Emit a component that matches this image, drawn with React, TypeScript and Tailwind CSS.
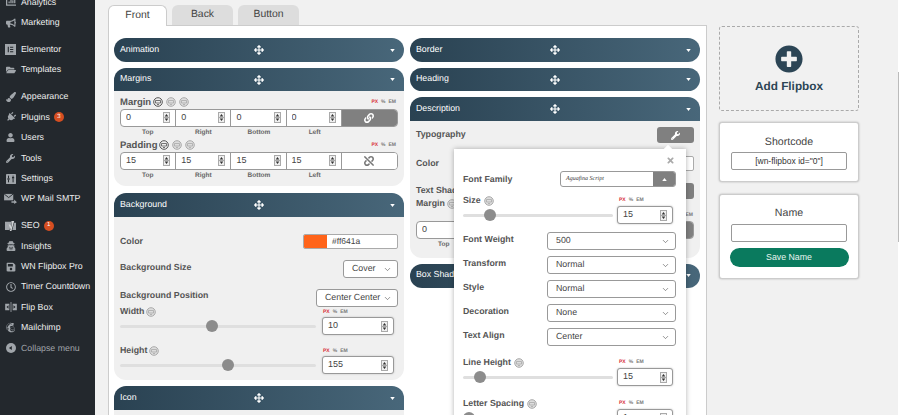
import type { ReactNode } from "react";
import {
  FaArrowsAlt,
  FaBullhorn,
  FaChartBar,
  FaFolderOpen,
  FaLink,
  FaMailchimp,
  FaPaintBrush,
  FaPlug,
  FaPlusCircle,
  FaRegClock,
  FaSave,
  FaTimes,
  FaUnlink,
  FaUser,
  FaUserSecret,
  FaWrench,
} from "react-icons/fa";
import { ChevronDown } from "lucide-react";

function ElementorIcon() {
  return (
    <svg viewBox="0 0 12 12" className="h-[11px] w-[11px]">
      <rect width="12" height="12" fill="#a0a5aa" />
      <path d="M3 3h1.2v6H3zM5.5 3H9v1.2H5.5zM5.5 5.4H9v1.2H5.5zM5.5 7.8H9V9H5.5z" fill="#23282d" />
    </svg>
  );
}

function SettingsIcon() {
  return (
    <svg viewBox="0 0 12 12" className="h-[10px] w-[10px]">
      <rect width="12" height="12" rx="1" fill="#a0a5aa" />
      <path d="M3 2v3M3 7v3M8.5 2v1.5M8.5 5.5V10" stroke="#23282d" strokeWidth="1.2" />
      <path d="M1.7 5h2.6v2H1.7zM7.2 3.5h2.6v2H7.2z" fill="#23282d" />
    </svg>
  );
}

function MailSmtpIcon() {
  return (
    <svg viewBox="0 0 14 12" className="h-[11px] w-[13px]">
      <path d="M0 1h10v7H0z" fill="#a0a5aa" />
      <path d="M0 1l5 4 5-4" fill="none" stroke="#23282d" />
      <path d="M8 9h3V7l3 3-3 2v-1.5H8z" fill="#a0a5aa" />
    </svg>
  );
}

function YoastIcon() {
  return (
    <svg viewBox="0 0 12 12" className="h-[11px] w-[11px]">
      <path d="M0 2h7L5 11H0z" fill="#a0a5aa" />
      <path d="M7 1h3L7 12H5l1-2-2-5h2l1 2.5z" fill="#cfd2d4" />
      <path d="M10 3h2v8H8z" fill="#a0a5aa" />
    </svg>
  );
}

function FlipBoxIcon() {
  return (
    <svg viewBox="0 0 14 12" className="h-[10px] w-[12px]">
      <path d="M0 2h5v8H0zM9 2h5v8H9z" fill="#a0a5aa" />
      <path d="M7 0v12" stroke="#a0a5aa" />
      <path d="M1.5 6L4 4v4zM12.500 6L10 4v4z" fill="#23282d" />
    </svg>
  );
}

function CollapseIcon() {
  return (
    <svg viewBox="0 0 12 12" className="h-[10px] w-[10px]">
      <circle cx="6" cy="6" r="6" fill="#a0a5aa" />
      <path d="M3.500 6L7 3.500v5z" fill="#23282d" />
    </svg>
  );
}

function NavItem({ icon, label, badge, dim }: { icon: ReactNode; label: string; badge?: string; dim?: boolean }) {
  return (
    <div className={`flex h-[20.4px] items-center pl-[4px] text-[8.800px] ${dim ? "text-[#a0a5aa]" : "text-[#eeeeee]"}`}>
      <span className="flex w-[13px] justify-center text-[#a0a5aa]">{icon}</span>
      <span className="ml-[4px] whitespace-nowrap">{label}</span>
      {badge && (
        <span className="ml-[4px] flex h-[10px] w-[10px] items-center justify-center rounded-full bg-[#d54e21] text-[6px] text-white">
          {badge}
        </span>
      )}
    </div>
  );
}

function Sidebar() {
  return (
    <aside className="-mt-[8px] h-[430px] w-[95px] shrink-0 bg-[#23282d]">
      <NavItem icon={<FaChartBar size={10} />} label="Analytics" />
      <NavItem icon={<FaBullhorn size={10} />} label="Marketing" />
      <div className="mt-[6.6px]">
        <NavItem icon={<ElementorIcon />} label="Elementor" />
        <NavItem icon={<FaFolderOpen size={10} />} label="Templates" />
      </div>
      <div className="mt-[6.6px]">
        <NavItem icon={<FaPaintBrush size={10} />} label="Appearance" />
        <NavItem icon={<FaPlug size={10} className="rotate-45" />} label="Plugins" badge="3" />
        <NavItem icon={<FaUser size={9} />} label="Users" />
        <NavItem icon={<FaWrench size={9} />} label="Tools" />
        <NavItem icon={<SettingsIcon />} label="Settings" />
        <NavItem icon={<MailSmtpIcon />} label="WP Mail SMTP" />
      </div>
      <div className="mt-[6.6px]">
        <NavItem icon={<YoastIcon />} label="SEO" badge="1" />
        <NavItem icon={<FaUserSecret size={10} />} label="Insights" />
        <NavItem icon={<FaSave size={10} />} label="WN Flipbox Pro" />
        <NavItem icon={<FaRegClock size={10} />} label="Timer Countdown" />
        <NavItem icon={<FlipBoxIcon />} label="Flip Box" />
        <NavItem icon={<FaMailchimp size={11} />} label="Mailchimp" />
        <NavItem icon={<CollapseIcon />} label="Collapse menu" dim />
      </div>
    </aside>
  );
}

function Header({ title, open, className = "" }: { title: string; open?: boolean; className?: string }) {
  return (
    <div
      className={`relative flex items-center justify-between bg-gradient-to-r from-[#2a4252] to-[#48677a] pl-[6px] pr-[9px] text-[8.800px] text-white ${
        open ? "rounded-t-[12px]" : "rounded-[12px]"
      } ${className}`}
    >
      <span className="-mt-[1px]">{title}</span>
      <FaArrowsAlt size={10} className="absolute left-1/2 -ml-[5px] text-white" />
      <svg viewBox="0 0 6 4" className="h-[3px] w-[5px]">
        <path d="M0 0h6L3 4z" fill="#fff" />
      </svg>
    </div>
  );
}

function DeviceIcon({ active }: { active?: boolean }) {
  return (
    <svg viewBox="0 0 10 10" className="h-[10px] w-[10px]">
      <circle cx="5" cy="5" r="4.300" fill={active ? "#eee" : "#ddd"} stroke={active ? "#555" : "#aaa"} strokeWidth="1" />
      <path d="M2.500 3.500h5v2.500h-5zM4 7.500h2" fill="none" stroke={active ? "#555" : "#aaa"} strokeWidth="0.800" />
    </svg>
  );
}

function Units() {
  return (
    <div className="flex gap-[3px] text-[5px] font-bold leading-none text-[#777]">
      <span className="text-[#d9363e]">PX</span>
      <span>%</span>
      <span>EM</span>
    </div>
  );
}

function Spinner() {
  return (
    <svg viewBox="0 0 7 11" className="h-[11px] w-[7px] shrink-0">
      <rect x="0.500" y="0.500" width="6" height="10" fill="#efefef" stroke="#aaa" />
      <path d="M0.500 5.500h6" stroke="#aaa" />
      <path d="M3.500 2l1.800 2.500H1.700zM3.500 9L1.700 6.500h3.600z" fill="#333" />
    </svg>
  );
}

function NumberField({ value, className = "" }: { value: string; className?: string }) {
  return (
    <div className={`flex h-[18px] items-center pl-[5px] pr-[5px] text-[9px] text-[#444] ${className}`}>
      <input readOnly value={value} className="w-full min-w-0 bg-transparent outline-none" />
      <Spinner />
    </div>
  );
}

function BoxedNumber({ value, className = "" }: { value: string; className?: string }) {
  return (
    <NumberField
      value={value}
      className={`rounded-[3px] border border-[#999] bg-white pl-[5px] pr-[5px] shadow-[0_0_2px_#bbb] ${className}`}
    />
  );
}

function LinkedInputs({ value, linked }: { value: string; linked?: boolean }) {
  return (
    <div className="grid h-[18px] grid-cols-5 overflow-hidden rounded-[4px] border border-[#999] bg-white">
      {[0, 1, 2, 3].map((i) => (
        <NumberField key={i} value={value} className="-mt-px border-r border-[#999]" />
      ))}
      {linked ? (
        <div className="flex items-center justify-center bg-[#808080] text-white">
          <FaLink size={10} />
        </div>
      ) : (
        <div className="flex items-center justify-center bg-white text-[#777]">
          <FaUnlink size={10} />
        </div>
      )}
    </div>
  );
}

function SideLabels() {
  return (
    <div className="grid h-[12.5px] grid-cols-5 items-center text-center text-[6.500px] font-bold text-[#666]">
      <span>Top</span>
      <span>Right</span>
      <span>Bottom</span>
      <span>Left</span>
    </div>
  );
}

function Dimension({ label, value, linked }: { label: string; value: string; linked?: boolean }) {
  return (
    <div>
      <div className="flex h-[12.5px] items-center justify-between pr-[2px]">
        <div className="flex items-center gap-[3px]">
          <span className="-mr-[1px] mt-[1px] text-[9.500px] font-bold text-[#555]">{label}</span>
          <DeviceIcon active />
          <DeviceIcon />
          <DeviceIcon />
        </div>
        <Units />
      </div>
      <LinkedInputs value={value} linked={linked} />
      <SideLabels />
    </div>
  );
}

function Slider({ percent }: { percent: number }) {
  return (
    <div className="relative flex h-[18px] flex-1 items-center">
      <div className="h-[3px] w-full rounded-full bg-[#dfdfdf]" />
      <div
        className="absolute -ml-[6px] h-[12px] w-[12px] rounded-full bg-[#8c8c8c]"
        style={{ left: `${percent}%` }}
      />
    </div>
  );
}

function Label({ children, className = "" }: { children: ReactNode; className?: string }) {
  return <span className={`whitespace-nowrap text-[8.800px] font-bold text-[#555] ${className}`}>{children}</span>;
}

function SelectBox({ value, className = "" }: { value: string; className?: string }) {
  return (
    <div
      className={`flex h-[18px] items-center justify-between rounded-[3px] border border-[#999] bg-white pl-[8px] pr-[5px] text-[8.800px] text-[#444] ${className}`}
    >
      <span className="whitespace-nowrap">{value}</span>
      <ChevronDown size={9} strokeWidth={1.500} className="shrink-0" />
    </div>
  );
}

function MarginsPanel() {
  return (
    <div>
      <Header title="Margins" open className="h-[23px]" />
      <div className="rounded-b-[12px] bg-[#f0f0f0] px-[6px] pb-[4px] pt-[5px]">
        <Dimension label="Margin" value="0" linked />
        <Dimension label="Padding" value="15" />
      </div>
    </div>
  );
}

function SliderRow({ label, value, percent, className = "" }: { label: string; value: string; percent: number; className?: string }) {
  return (
    <div className={className}>
      <div className="flex h-[10px] items-center">
        <div className="flex flex-1 items-center gap-[2px]">
          <Label>{label}</Label>
          <DeviceIcon />
        </div>
        <div className="mr-[4px] w-[72px] pl-[1px]">
          <Units />
        </div>
      </div>
      <div className="flex items-center">
        <Slider percent={percent} />
        <BoxedNumber value={value} className="ml-[6px] mr-[4px] w-[72px] shrink-0" />
      </div>
    </div>
  );
}

function BackgroundPanel() {
  return (
    <div className="mt-px">
      <Header title="Background" open className="h-[24px]" />
      <div className="rounded-b-[12px] bg-[#f0f0f0] px-[6px] pb-[6px] pt-[17px]">
        <div className="flex h-[15px] items-center justify-between">
          <Label>Color</Label>
          <div className="flex h-[15px] w-[95px] overflow-hidden rounded-[2px] border border-[#aaa] bg-white text-[8.500px] text-[#444]">
            <span className="w-[23px] bg-[#ff641a]" />
            <span className="ml-[5px] self-center">#ff641a</span>
          </div>
        </div>
        <div className="mt-[11px] flex items-start justify-between">
          <Label className="mt-[1px]">Background Size</Label>
          <SelectBox value="Cover" className="w-[55px]" />
        </div>
        <div className="mt-[11px] flex items-start justify-between">
          <Label>Background Position</Label>
          <SelectBox value="Center Center" className="w-[82px]" />
        </div>
        <SliderRow label="Width" value="10" percent={47} />
        <SliderRow label="Height" value="155" percent={55} className="mt-[11px]" />
      </div>
    </div>
  );
}

function PopupRow({ label, value }: { label: string; value: string }) {
  return (
    <div className="mt-[6px] flex items-start">
      <Label className="w-[84px] leading-[14px]">{label}</Label>
      <SelectBox value={value} className="flex-1" />
    </div>
  );
}

function PopupSlider({ label, value, percent, className = "" }: { label: string; value: string; percent: number; className?: string }) {
  return (
    <div className={className}>
      <div className="flex h-[11px] items-center">
        <div className="flex flex-1 items-center gap-[3px]">
          <Label>{label}</Label>
          <DeviceIcon />
        </div>
        <div className="mr-[3px] w-[56px] pl-[2px]">
          <Units />
        </div>
      </div>
      <div className="flex items-center">
        <Slider percent={percent} />
        <BoxedNumber value={value} className="ml-[4px] mr-[3px] w-[56px] shrink-0" />
      </div>
    </div>
  );
}

function TypographyPopup() {
  return (
    <div className="absolute left-[44px] top-[52px] z-10 w-[232px] bg-white pb-[10px] pl-[9px] pr-[10px] shadow-[0_0_5px_rgba(0,0,0,0.3)]">
      <div className="absolute -top-[3px] right-[15px] h-[6px] w-[6px] rotate-45 bg-white" />
      <div className="flex h-[22px] justify-end pr-[1px] pt-[7px] text-[#aaaaaa]">
        <FaTimes size={9} />
      </div>
      <div className="flex h-[16px] items-center justify-between">
        <Label className="mt-[1px]">Font Family</Label>
        <div className="flex h-[16px] w-[116px] overflow-hidden rounded-[3px] border border-[#999] bg-white">
          <span className="flex-1 pl-[5px] font-['Liberation_Serif',serif] text-[6px] italic leading-[14px] text-[#333]">
            Aguafina Script
          </span>
          <span className="flex w-[22px] items-center justify-center bg-[#808080]">
            <svg viewBox="0 0 6 4" className="h-[3px] w-[5px]">
              <path d="M0 4h6L3 0z" fill="#fff" />
            </svg>
          </span>
        </div>
      </div>
      <PopupSlider label="Size" value="15" percent={18} className="mt-[8px]" />
      <div className="pt-[2px]">
        <PopupRow label="Font Weight" value="500" />
        <PopupRow label="Transform" value="Normal" />
        <PopupRow label="Style" value="Normal" />
        <PopupRow label="Decoration" value="None" />
        <PopupRow label="Text Align" value="Center" />
      </div>
      <PopupSlider label="Line Height" value="15" percent={11} className="mt-[11px]" />
      <PopupSlider label="Letter Spacing" value="1" percent={4} className="mt-[12px]" />
    </div>
  );
}

function GrayButton({ children }: { children?: ReactNode }) {
  return (
    <div className="flex h-[16px] w-[37px] items-center justify-center rounded-[3px] bg-[#808080] text-white">
      {children}
    </div>
  );
}

function DescriptionPanel() {
  return (
    <div className="relative">
      <Header title="Description" open className="h-[24px]" />
      <div className="rounded-b-[12px] bg-[#f0f0f0] px-[6px] pb-[6px] pt-[6px]">
        <div className="flex items-center justify-between">
          <Label>Typography</Label>
          <GrayButton>
            <FaWrench size={9} />
          </GrayButton>
        </div>
        <div className="mt-[13px] flex h-[15px] items-center justify-between">
          <Label>Color</Label>
          <div className="h-[15px] w-[95px] rounded-[2px] border border-[#aaa] bg-white" />
        </div>
        <div className="mt-[12px] flex items-center justify-between">
          <Label>Text Shadow</Label>
          <GrayButton />
        </div>
        <div className="flex h-[10px] items-center gap-[2px]">
          <Label>Margin</Label>
          <DeviceIcon />
        </div>
        <div className="flex h-[12px] items-center justify-end pr-[1px]">
          <Units />
        </div>
        <LinkedInputs value="0" linked />
        <SideLabels />
      </div>
      <TypographyPopup />
    </div>
  );
}

function Tab({ label, active }: { label: string; active?: boolean }) {
  return (
    <div
      className={`flex items-center justify-center rounded-t-[6px] text-[10.400px] text-[#444] ${
        active ? "-mb-px h-[21px] w-[59px] border border-b-0 border-[#ccc] bg-white" : "h-[20px] w-[61px] bg-[#dddddd]"
      }`}
    >
      {label}
    </div>
  );
}

function BuilderPanel() {
  return (
    <div className="flex w-[599px] shrink-0 flex-col pt-[5px]">
      <div className="relative z-10 flex items-end gap-[5px]">
        <Tab label="Front" active />
        <Tab label="Back" />
        <Tab label="Button" />
      </div>
      <div className="grid flex-1 grid-cols-2 gap-x-[6px] border border-[#ccc] bg-white pl-[5px] pr-[6px] pt-[12px]">
        <div className="flex flex-col gap-[6px]">
          <Header title="Animation" className="h-[24px]" />
          <MarginsPanel />
          <BackgroundPanel />
          <div>
            <Header title="Icon" open className="h-[24px]" />
            <div className="h-[20px] bg-[#f0f0f0]" />
          </div>
        </div>
        <div className="flex flex-col gap-[6px]">
          <Header title="Border" className="h-[24px]" />
          <Header title="Heading" className="h-[23px]" />
          <DescriptionPanel />
          <Header title="Box Shadow" className="h-[24px]" />
        </div>
      </div>
    </div>
  );
}

function SideColumn() {
  return (
    <div className="ml-[12px] w-[140px] shrink-0 pt-[26px]">
      <div className="flex h-[85px] flex-col items-center rounded-[3px] border border-dashed border-[#aaa] pt-[18px]">
        <FaPlusCircle size={28} className="text-[#2c4555]" />
        <span className="mt-[5px] text-[11.800px] font-bold text-[#2c4555]">Add Flipbox</span>
      </div>
      <div className="mt-[11px] flex h-[60px] flex-col items-center rounded-[3px] border border-[#ccc] bg-white pt-[13px] shadow-[0_0_2px_#aaa]">
        <span className="text-[10.600px] leading-[13px] text-[#444]">Shortcode</span>
        <input
          readOnly
          value={'[wn-flipbox id="0"]'}
          className="mt-[3px] h-[18px] w-[116px] rounded-[2px] border border-[#999] text-center text-[8.500px] text-[#333] outline-none"
        />
      </div>
      <div className="mt-[12px] flex h-[85px] flex-col items-center rounded-[3px] border border-[#ccc] bg-white pt-[12px] shadow-[0_0_2px_#aaa]">
        <span className="text-[10.600px] leading-[13px] text-[#444]">Name</span>
        <input readOnly className="mt-[4px] h-[18px] w-[116px] rounded-[2px] border border-[#999] outline-none" />
        <button
          type="button"
          className="mt-[6px] h-[19px] w-[119px] rounded-full bg-[#0a7a5e] text-[8.800px] text-[#e8f5f0]"
        >
          Save Name
        </button>
      </div>
    </div>
  );
}

export default function App() {
  return (
    <div className="flex h-[415px] w-[900px] overflow-hidden bg-[#f1f1f1] font-['Liberation_Sans',Arial,sans-serif] [text-rendering:geometricPrecision]">
      <Sidebar />
      <main className="ml-[13px] flex flex-1">
        <BuilderPanel />
        <SideColumn />
        <div className="ml-auto w-[2px] bg-white">
          <div className="mt-[72px] h-[170px] w-px bg-[#bbbbbb]" />
        </div>
      </main>
    </div>
  );
}
